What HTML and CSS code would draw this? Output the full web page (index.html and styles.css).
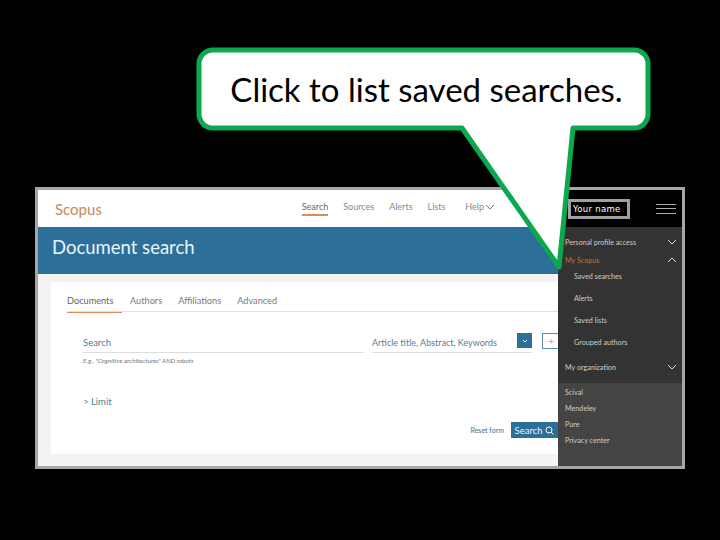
FILE: index.html
```html
<!DOCTYPE html>
<html lang="en">
<head>
    <meta charset="UTF-8">
    <title>Document search</title>
    <link rel="stylesheet" href="styles.css">
</head>
<body>
    <section class="screen">
        <div class="main">
            <header class="top">
                <span class="logo">Scopus</span>
                <nav class="nav">
                    <a class="active">Search</a>
                    <a>Sources</a>
                    <a>Alerts</a>
                    <a>Lists</a>
                    <a class="help">Help
                        <svg width="10" height="6" viewBox="0 0 10 6"><path d="M1 1l4 4 4-4" fill="none" stroke="#777" stroke-width="1"/></svg>
                    </a>
                </nav>
            </header>
            <div class="banner">Document search</div>
            <div class="content">
                <div class="card">
                    <div class="tabs">
                        <a class="active">Documents</a>
                        <a>Authors</a>
                        <a>Affiliations</a>
                        <a>Advanced</a>
                    </div>
                    <div class="form">
                        <div class="fields">
                            <div class="field-search">
                                <div class="label">Search</div>
                                <div class="hint">E.g., "Cognitive architectures" AND robots</div>
                            </div>
                            <div class="field-scope">
                                <span>Article title, Abstract, Keywords</span>
                                <span class="select">
                                    <svg width="6" height="4" viewBox="0 0 6 4"><path d="M1 1l2 2 2-2" fill="none" stroke="#fff" stroke-width="1"/></svg>
                                </span>
                            </div>
                            <span class="add">+</span>
                        </div>
                        <div class="limit">&gt; Limit</div>
                        <div class="actions">
                            <a class="reset">Reset form</a>
                            <a class="go">Search
                                <svg width="9" height="9" viewBox="0 0 9 9"><circle cx="4" cy="4" r="3" fill="none" stroke="#fff"/><path d="M6 6l2.500 2.500" stroke="#fff"/></svg>
                            </a>
                        </div>
                    </div>
                </div>
            </div>
        </div>
        <aside class="side">
            <div class="side-top">
                <span class="user">Your name</span>
                <span class="burger"><i></i><i></i><i></i></span>
            </div>
            <div class="side-menu">
                <div class="row row-first">Personal profile access
                    <svg width="10" height="6" viewBox="0 0 10 6"><path d="M1 1l4 4 4-4" fill="none" stroke="#ddd"/></svg>
                </div>
                <div class="row row-open">My Scopus
                    <svg width="10" height="6" viewBox="0 0 10 6"><path d="M1 5l4-4 4 4" fill="none" stroke="#ddd"/></svg>
                </div>
                <a class="sub sub-first">Saved searches</a>
                <a class="sub">Alerts</a>
                <a class="sub">Saved lists</a>
                <a class="sub">Grouped authors</a>
                <div class="row row-org">My organization
                    <svg width="10" height="6" viewBox="0 0 10 6"><path d="M1 1l4 4 4-4" fill="none" stroke="#ddd"/></svg>
                </div>
            </div>
            <div class="side-links">
                <a>Scival</a>
                <a>Mendeley</a>
                <a>Pure</a>
                <a>Privacy center</a>
            </div>
        </aside>
    </section>
    <div class="callout">
        <svg class="bubble" width="455" height="224" viewBox="0 0 455 224">
            <path d="M17 3H438a14 14 0 0 1 14 14V67a14 14 0 0 1-14 14H377L363 220 266 81H17a14 14 0 0 1-14-14V17a14 14 0 0 1 14-14z" fill="#fff" stroke="#0ba84f" stroke-width="5" stroke-linejoin="round"/>
        </svg>
        <div class="callout-text">Click to list saved searches.</div>
    </div>
</body>
</html>
```

FILE: styles.css
```css
*{
    margin: 0;
    padding: 0;
    box-sizing: border-box;
}
body{
    width: 720px;
    height: 540px;
    background: #000;
    padding: 187px 35px 0;
    font-family: "Lato", "Open Sans", sans-serif;
    font-weight: 300;
    overflow: hidden;
}
.screen{
    width: 650px;
    height: 282px;
    border: 3px solid #a6a6a6;
    display: flex;
    background: #fff;
}
.main{
    width: 520px;
    display: flex;
    flex-direction: column;
}
.top{
    height: 37px;
    display: flex;
    align-items: center;
    padding: 0 63px 0 17px;
    background: #fff;
}
.logo{
    font-size: 15px;
    color: #c9875a;
    font-weight: 400;
}
.nav{
    margin-left: auto;
    display: flex;
    gap: 15px;
    font-size: 9px;
    font-weight: 400;
    color: #8a8a8a;
}
.nav a{
    padding-bottom: 2px;
    border-bottom: 2px solid transparent;
}
.nav a.active{
    color: #666;
    border-bottom-color: #e08a55;
}
.nav .help{
    margin-left: 5px;
    display: flex;
    align-items: center;
    gap: 1px;
}
.banner{
    height: 47px;
    background: #2c7099;
    color: #e9f5f9;
    font-size: 18.500px;
    font-weight: 400;
    line-height: 41px;
    padding-left: 14px;
}
.content{
    flex: 1;
    background: #f3f3f3;
    padding: 8px 0 11px 13px;
}
.card{
    height: 172px;
    background: #fff;
    display: flex;
    flex-direction: column;
    padding: 11px 0 0 16px;
}
.tabs{
    display: flex;
    gap: 16px;
    height: 19px;
    font-size: 9.200px;
    font-weight: 400;
    line-height: 15px;
    color: #7a7a7a;
    border-bottom: 1px solid #e2e2e2;
}
.tabs a.active{
    color: #666;
    width: 55px;
    margin-right: -8px;
    box-shadow: 0 1px 0 #e08a55;
    height: 19px;
}
.form{
    flex: 1;
    padding: 22px 0 0 16px;
    display: flex;
    flex-direction: column;
}
.fields{
    display: flex;
    align-items: flex-start;
}
.field-search{
    width: 281px;
    margin-right: 8px;
}
.label{
    height: 19px;
    font-size: 9.500px;
    font-weight: 400;
    line-height: 17px;
    color: #3f7f99;
    border-bottom: 1px solid #dedede;
}
.hint{
    margin-top: 3px;
    font-size: 6.400px;
    font-weight: 400;
    font-style: italic;
    line-height: 9px;
    color: #777;
    white-space: nowrap;
}
.field-scope{
    width: 160px;
    height: 19px;
    display: flex;
    justify-content: space-between;
    font-size: 9px;
    font-weight: 400;
    line-height: 17px;
    color: #58808f;
    border-bottom: 1px solid #dedede;
}
.select{
    width: 15px;
    height: 15px;
    margin-top: -1px;
    background: #2c7099;
    display: flex;
    align-items: center;
    justify-content: center;
}
.add{
    width: 18px;
    height: 16px;
    margin: -1px -2px 0 10px;
    border: 1px solid #5d8ea8;
    color: #5d8ea8;
    font-size: 12px;
    line-height: 13px;
    text-align: center;
}
.limit{
    margin-top: 30px;
    font-size: 9.500px;
    font-weight: 400;
    line-height: 14px;
    color: #4d7f96;
}
.actions{
    margin-top: 13px;
    display: flex;
    justify-content: flex-end;
    align-items: center;
    gap: 7px;
}
.reset{
    font-size: 7px;
    font-weight: 400;
    color: #4a6f85;
}
.go{
    width: 47px;
    height: 16px;
    background: #2c7099;
    color: #e9f5f9;
    font-size: 9.500px;
    font-weight: 400;
    display: flex;
    align-items: center;
    justify-content: center;
    gap: 3px;
}
.side{
    width: 124px;
    display: flex;
    flex-direction: column;
    color: #ccc;
    font-size: 7.200px;
    font-weight: 400;
}
.side-top{
    height: 37px;
    background: #000;
    display: flex;
    align-items: center;
    padding: 0 6px 0 10px;
    justify-content: space-between;
}
.user{
    width: 62px;
    height: 20px;
    border: 3px solid #a0a0a0;
    color: #fff;
    font-family: "DejaVu Sans", sans-serif;
    font-size: 8.500px;
    line-height: 14px;
    letter-spacing: .3px;
    padding-left: 2px;
    white-space: nowrap;
}
.burger{
    width: 20px;
    display: flex;
    flex-direction: column;
    gap: 3.500px;
}
.burger i{
    height: 1px;
    background: #b0b0b0;
}
.side-menu{
    height: 156px;
    background: #333;
    display: flex;
    flex-direction: column;
}
.row{
    display: flex;
    justify-content: space-between;
    align-items: center;
    padding: 0 5px 0 7px;
    height: 12px;
}
.row-first{
    margin-top: 9px;
}
.row-open{
    margin-top: 6px;
    color: #c9703a;
}
.sub{
    height: 12px;
    line-height: 12px;
    margin-top: 10px;
    padding-left: 16px;
}
.sub-first{
    margin-top: 5px;
}
.row-org{
    margin-top: 12px;
}
.side-links{
    flex: 1;
    background: #444;
    padding: 4px 0 0 7px;
    display: flex;
    flex-direction: column;
    gap: 4px;
    line-height: 12px;
}
.callout{
    position: absolute;
    left: 196px;
    top: 47px;
    width: 455px;
    height: 84px;
}
.bubble{
    position: absolute;
    top: 0;
    left: 0;
}
.callout-text{
    position: relative;
    height: 84px;
    line-height: 84px;
    padding-left: 6px;
    text-align: center;
    font-size: 33px;
    font-weight: 400;
    color: #000;
    white-space: nowrap;
}
```
